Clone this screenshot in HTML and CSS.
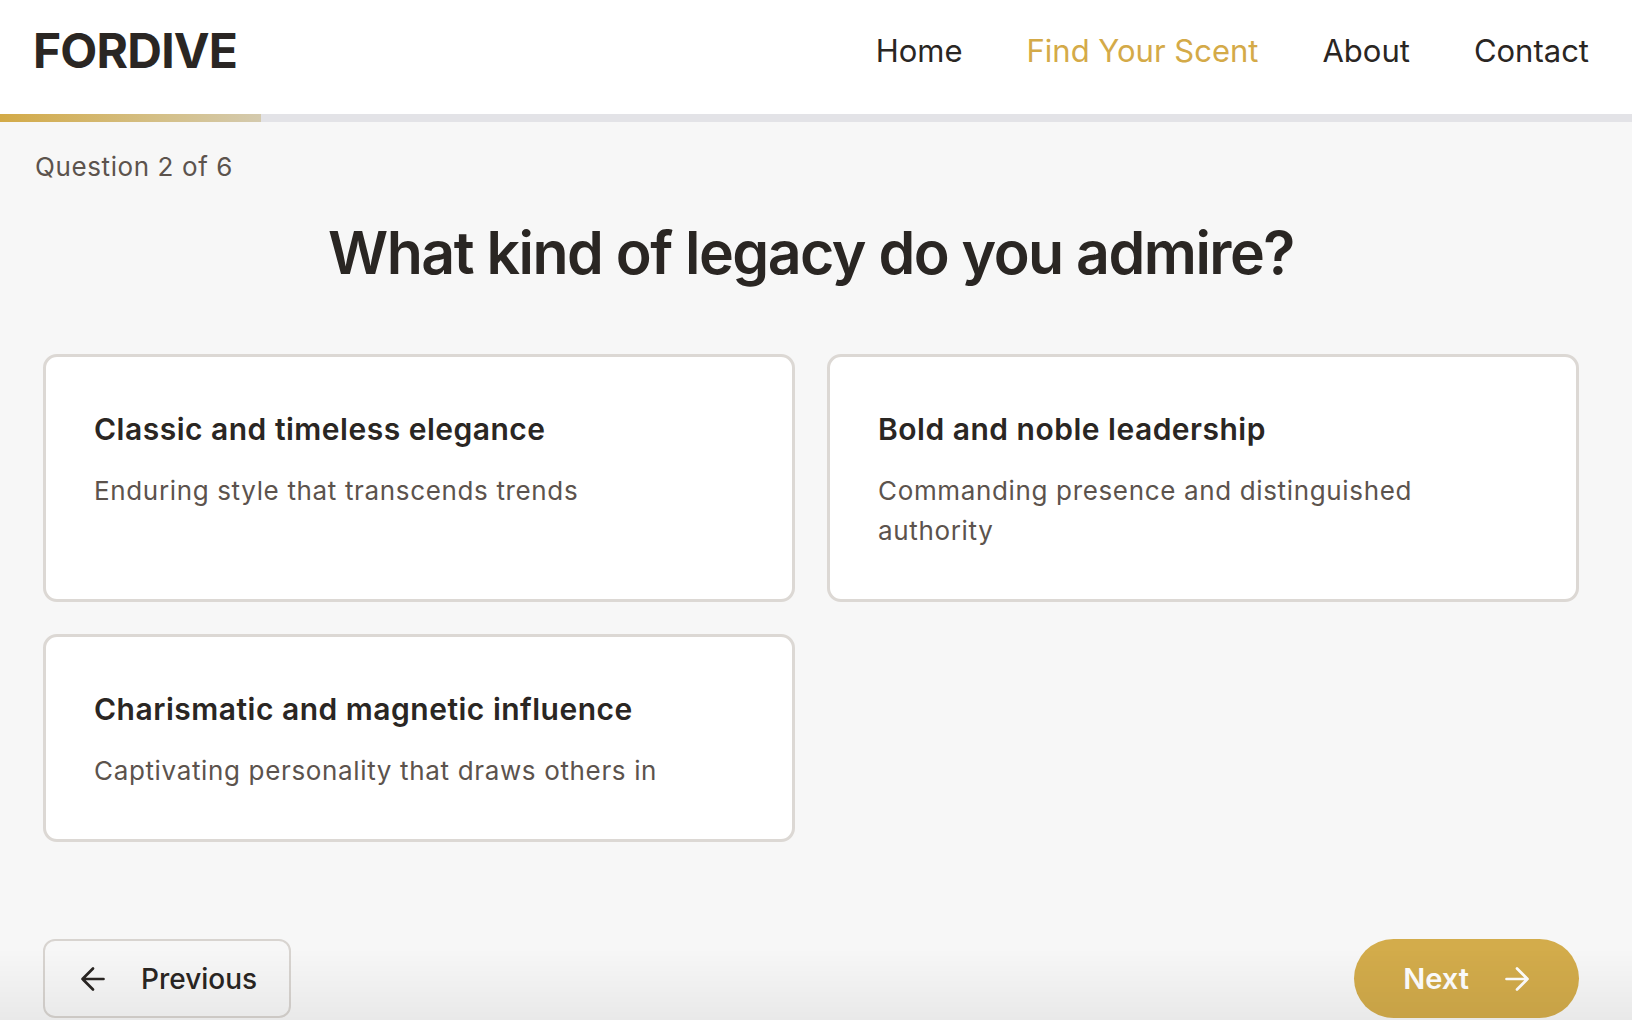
FILE: index.html
```html
<!DOCTYPE html>
<html lang="en">
<head>
<meta charset="utf-8">
<title>FORDIVE – Find Your Scent</title>
<link rel="stylesheet" href="styles.css">
</head>
<body>
<header class="site-header">
  <div class="logo">FORDIVE</div>
  <nav class="nav">
    <a href="#" class="nav-link">Home</a>
    <a href="#" class="nav-link active">Find Your Scent</a>
    <a href="#" class="nav-link">About</a>
    <a href="#" class="nav-link">Contact</a>
  </nav>
</header>
<div class="progress"><div class="progress-fill" style="width: 16%"></div></div>
<main class="quiz">
  <p class="counter">Question 2 of 6</p>
  <h1 class="question">What kind of legacy do you admire?</h1>
  <div class="options">
    <button class="option">
      <span class="option-title">Classic and timeless elegance</span>
      <span class="option-desc">Enduring style that transcends trends</span>
    </button>
    <button class="option">
      <span class="option-title">Bold and noble leadership</span>
      <span class="option-desc">Commanding presence and distinguished authority</span>
    </button>
    <button class="option">
      <span class="option-title">Charismatic and magnetic influence</span>
      <span class="option-desc">Captivating personality that draws others in</span>
    </button>
  </div>
  <div class="actions">
    <button class="btn btn-prev">
      <svg class="icon" viewBox="0 0 24 24" width="24" height="24"><path d="M19 12H5M12 19l-7-7 7-7"/></svg>
      <span>Previous</span>
    </button>
    <button class="btn btn-next">
      <span>Next</span>
      <svg class="icon" viewBox="0 0 24 24" width="24" height="24"><path d="M5 12h14M12 5l7 7-7 7"/></svg>
    </button>
  </div>
</main>
<div class="bottom-fade"></div>
</body>
</html>
```

FILE: styles.css
```css
* { box-sizing: border-box; }
html, body { margin: 0; padding: 0; }
body {
  background: #f7f7f7;
  font-family: Inter, "Noto Sans", "Liberation Sans", sans-serif;
  color: #2a2623;
  min-height: 1020px;
  overflow: hidden;
}
.site-header {
  background: #fff;
  height: 114px;
  display: flex;
  align-items: center;
  justify-content: space-between;
  padding: 0 43px 12px 33px;
}
.logo {
  font-size: 48px;
  font-weight: 700;
  letter-spacing: -0.8px;
  color: #2a2623;
  line-height: 1;
}
.nav {
  display: flex;
  gap: 64px;
}
.nav-link {
  font-size: 31px;
  color: #2a2623;
  text-decoration: none;
  line-height: 1.2;
}
.nav-link.active { color: #d4aa48; }
.progress {
  height: 8px;
  background: #e3e3e7;
}
.progress-fill {
  height: 100%;
  background: linear-gradient(90deg, #d3aa47 0%, #d4bf86 60%, #d4caae 100%);
}
.quiz {
  padding: 25px 53px 0 43px;
}
.counter {
  margin: 0 0 0 -8px;
  font-size: 26px;
  line-height: 39px;
  letter-spacing: 0.6px;
  color: #5c534d;
}
.question {
  margin: 31px 0 65px;
  text-align: center;
  font-size: 59px;
  font-weight: 600;
  line-height: 72px;
  letter-spacing: -1.5px;
  color: #2a2623;
}
.options {
  display: grid;
  grid-template-columns: 1fr 1fr;
  gap: 32px;
}
.option {
  display: flex;
  flex-direction: column;
  align-items: flex-start;
  text-align: left;
  background: #fff;
  border: 3px solid #dcd8d4;
  border-radius: 14px;
  padding: 48px;
  font-family: inherit;
  cursor: pointer;
}
.option-title {
  font-size: 30px;
  font-weight: 600;
  line-height: 48px;
  letter-spacing: 0.5px;
  color: #2a2623;
  margin-bottom: 18px;
}
.option-desc {
  font-size: 26px;
  line-height: 40px;
  letter-spacing: 0.65px;
  color: #5c534d;
  max-width: 600px;
}
.actions {
  display: flex;
  justify-content: space-between;
  margin-top: 97px;
}
.btn {
  display: flex;
  align-items: center;
  height: 79px;
  font-family: inherit;
  font-size: 28px;
  font-weight: 500;
  cursor: pointer;
}
.btn .icon {
  width: 36px;
  height: 36px;
  flex: none;
  fill: none;
  stroke: currentColor;
  stroke-width: 1.8;
  stroke-linecap: round;
  stroke-linejoin: round;
}
.btn-prev {
  background: #f7f7f7;
  border: 2px solid #d8d4d0;
  border-radius: 12px;
  color: #2a2623;
  padding: 0 32px 0 30px;
  gap: 30px;
}
.btn-next {
  background: #d3ac4b;
  border: none;
  border-radius: 40px;
  color: #fff;
  font-size: 29px;
  font-weight: 600;
  padding: 0 44px 0 49px;
  gap: 30px;
}
.bottom-fade {
  position: fixed;
  left: 0;
  right: 0;
  bottom: 0;
  height: 72px;
  background: linear-gradient(180deg, rgba(0,0,0,0) 0%, rgba(0,0,0,0.055) 100%);
  pointer-events: none;
}
```
